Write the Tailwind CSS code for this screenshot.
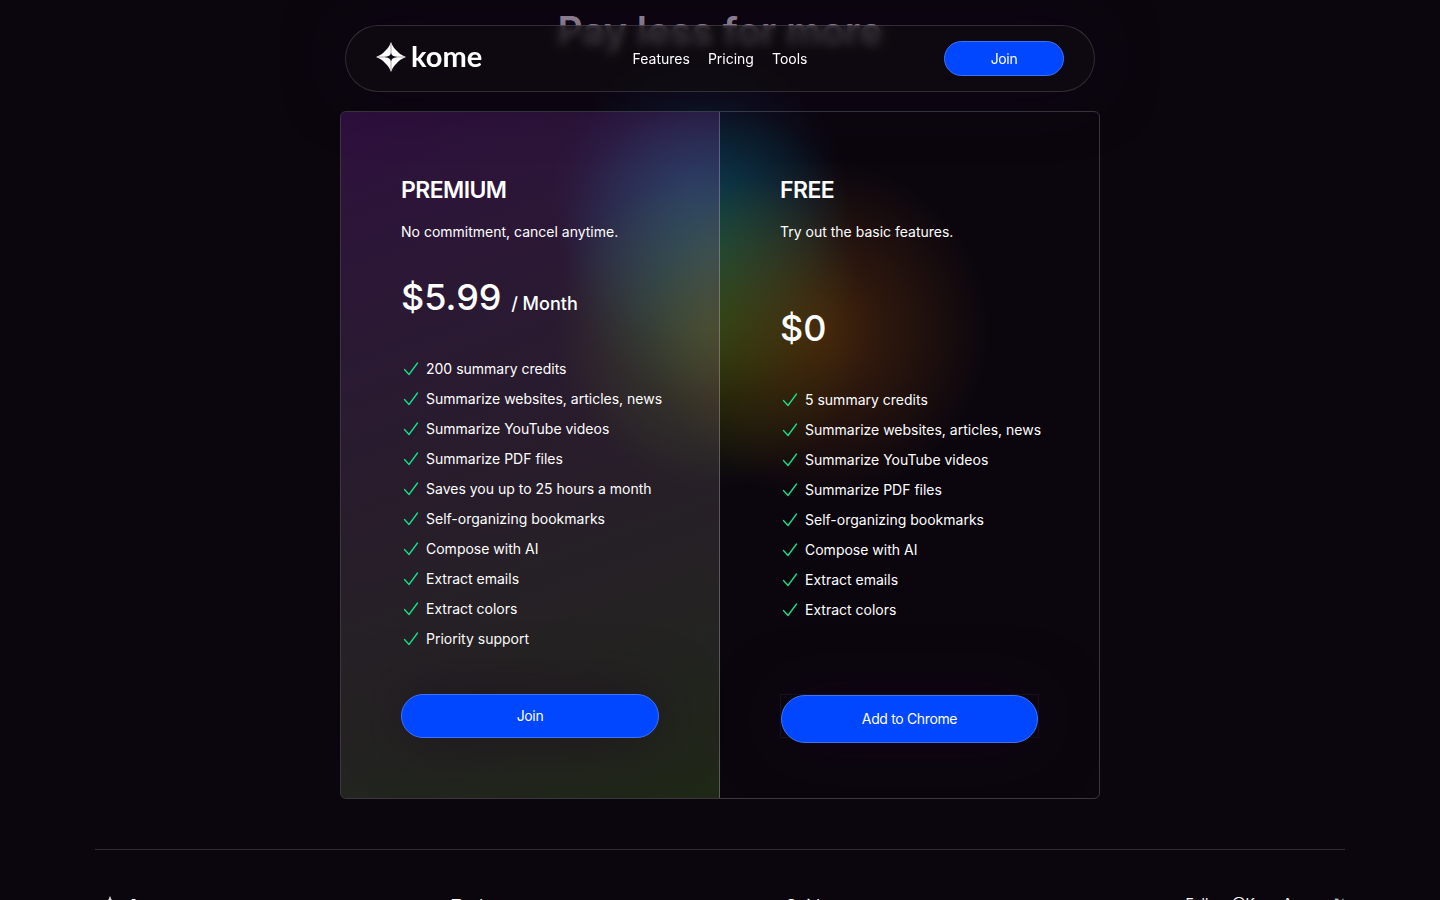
<!DOCTYPE html>
<html lang="en">
<head>
  <meta charset="UTF-8" />
  <meta name="viewport" content="width=device-width, initial-scale=1" />
  <title>Kome - Pricing</title>
  <script src="https://cdn.jsdelivr.net/npm/@tailwindcss/browser@4"></script>
</head>
<body class="h-screen overflow-hidden bg-[#0b060e] font-[Inter,sans-serif] text-sm text-white">

  <!-- icons used more than once -->
  <svg class="hidden">
    <symbol id="check" viewBox="0 0 20 20">
      <path d="M3.500 10.500 8 15.500 16.500 4" fill="none" stroke="#10e58a" stroke-width="1.3" stroke-linecap="round" stroke-linejoin="round" />
    </symbol>
    <symbol id="star" viewBox="0 0 30 30">
      <path d="M15 0C16.500 4 18 6.500 21 9 23.500 12 26 13.500 30 15 26 16.500 23.500 18 21 21 18 23.500 16.500 26 15 30 13.500 26 12 23.500 9 21 6.500 18 4 16.500 0 15 4 13.500 6.500 12 9 9 12 6.500 13.500 4 15 0Z" fill="#fff" />
      <path d="M15 2V28M2 15H28" stroke="#0f0a12" stroke-opacity="0.45" stroke-width="0.8" />
      <path d="M15 11Q15.500 14.300 21.500 15 15.500 15.700 15 19.500 14.500 15.700 8.500 15 14.500 14.300 15 11Z" fill="#0f0a12" />
    </symbol>
  </svg>

  <!-- NAVBAR -->
  <header class="fixed inset-x-0 top-[25px] z-20 mx-auto flex h-[67px] w-full max-w-[750px] items-center justify-between rounded-full border border-white/15 bg-[#0f0b11]/70 px-[30px] shadow-[0_0_60px_rgba(20,0,30,0.5)] backdrop-blur-[5px]">
    <a href="/" class="flex flex-1 items-center gap-[5px] pb-1">
      <svg class="size-[30px] shrink-0"><use href="#star" /></svg>
      <span class="pb-[2px] font-[Lato,sans-serif] text-[29px] leading-[30px] font-bold">kome</span>
    </a>
    <nav class="flex gap-[18px]">
      <a href="#features">Features</a>
      <a href="#pricing">Pricing</a>
      <a href="#tools">Tools</a>
    </nav>
    <div class="flex flex-1 justify-end">
      <button class="h-[35px] w-[120px] rounded-full border border-[#3f72fa] bg-[#0047ff] tracking-tight">Join</button>
    </div>
  </header>

  <main id="pricing" class="relative mx-auto w-full max-w-[760px]">
    <h2 class="h-[111px] pt-[6px] text-center text-[39px] leading-[50px] font-semibold text-[#a89bad]">Pay less for more</h2>

    <!-- colour glow behind the plans -->
    <div class="absolute top-[50px] left-[210px] -z-10 size-[300px] bg-radial from-[#0e4070]/50 from-5% to-transparent to-70%"></div>
    <div class="absolute top-[100px] left-[220px] -z-10 size-[300px] bg-radial from-[#0a5458]/60 from-5% to-transparent to-70%"></div>
    <div class="absolute top-[170px] left-[210px] -z-10 size-[320px] bg-radial from-[#3d6b00]/50 to-transparent to-70%"></div>
    <div class="absolute top-[160px] left-[310px] -z-10 size-[340px] bg-radial from-[#7a3d0a]/50 to-transparent to-70%"></div>

    <section class="grid min-h-[688px] grid-cols-2 overflow-hidden rounded-md border border-white/20">
      <div class="flex flex-col border-r border-white/25 bg-linear-160 from-[#b932ff]/20 via-[#9b74a0]/20 to-[#6eaf37]/20 px-[60px] pt-[62px] pb-[60px]">
        <h3 class="text-[23px] leading-8 font-semibold tracking-tight">PREMIUM</h3>
        <p class="mt-4 leading-5">No commitment, cancel anytime.</p>
        <p class="mt-[31px] text-4xl leading-[48px] font-medium">$5.99 <span class="text-lg">/ Month</span></p>
        <ul class="mt-[33px] leading-[30px] whitespace-nowrap">
          <li class="flex items-center gap-[5px]"><svg class="size-5 shrink-0"><use href="#check" /></svg>200 summary credits</li>
          <li class="flex items-center gap-[5px]"><svg class="size-5 shrink-0"><use href="#check" /></svg>Summarize websites, articles, news</li>
          <li class="flex items-center gap-[5px]"><svg class="size-5 shrink-0"><use href="#check" /></svg>Summarize YouTube videos</li>
          <li class="flex items-center gap-[5px]"><svg class="size-5 shrink-0"><use href="#check" /></svg>Summarize PDF files</li>
          <li class="flex items-center gap-[5px]"><svg class="size-5 shrink-0"><use href="#check" /></svg>Saves you up to 25 hours a month</li>
          <li class="flex items-center gap-[5px]"><svg class="size-5 shrink-0"><use href="#check" /></svg>Self-organizing bookmarks</li>
          <li class="flex items-center gap-[5px]"><svg class="size-5 shrink-0"><use href="#check" /></svg>Compose with AI</li>
          <li class="flex items-center gap-[5px]"><svg class="size-5 shrink-0"><use href="#check" /></svg>Extract emails</li>
          <li class="flex items-center gap-[5px]"><svg class="size-5 shrink-0"><use href="#check" /></svg>Extract colors</li>
          <li class="flex items-center gap-[5px]"><svg class="size-5 shrink-0"><use href="#check" /></svg>Priority support</li>
        </ul>
        <button class="mt-auto h-11 rounded-full border border-[#3f72fa] bg-[#0047ff] tracking-tight shadow-[0_0_60px_rgba(26,0,30,0.5)]">Join</button>
      </div>

      <div class="flex flex-col px-[60px] pt-[62px] pb-[60px]">
        <h3 class="text-[23px] leading-8 font-semibold tracking-tight">FREE</h3>
        <p class="mt-4 leading-5">Try out the basic features.</p>
        <p class="mt-[62px] text-4xl leading-[48px] font-medium">$0</p>
        <ul class="mt-[33px] leading-[30px] whitespace-nowrap">
          <li class="flex items-center gap-[5px]"><svg class="size-5 shrink-0"><use href="#check" /></svg>5 summary credits</li>
          <li class="flex items-center gap-[5px]"><svg class="size-5 shrink-0"><use href="#check" /></svg>Summarize websites, articles, news</li>
          <li class="flex items-center gap-[5px]"><svg class="size-5 shrink-0"><use href="#check" /></svg>Summarize YouTube videos</li>
          <li class="flex items-center gap-[5px]"><svg class="size-5 shrink-0"><use href="#check" /></svg>Summarize PDF files</li>
          <li class="flex items-center gap-[5px]"><svg class="size-5 shrink-0"><use href="#check" /></svg>Self-organizing bookmarks</li>
          <li class="flex items-center gap-[5px]"><svg class="size-5 shrink-0"><use href="#check" /></svg>Compose with AI</li>
          <li class="flex items-center gap-[5px]"><svg class="size-5 shrink-0"><use href="#check" /></svg>Extract emails</li>
          <li class="flex items-center gap-[5px]"><svg class="size-5 shrink-0"><use href="#check" /></svg>Extract colors</li>
        </ul>
        <div class="mt-auto h-11 border border-white/5">
          <button class="h-12 w-full rounded-full border border-[#3f72fa] bg-[#0047ff] tracking-tight shadow-[0_0_60px_rgba(26,0,30,0.5)]">Add to Chrome</button>
        </div>
      </div>
    </section>
  </main>

  <!-- FOOTER -->
  <footer class="mx-auto mt-[50px] grid w-full max-w-[1250px] grid-cols-[356px_334px_1fr_auto] items-start border-t border-white/15 pt-[44px]">
    <a href="/" class="flex items-center gap-[5px]">
      <svg class="size-[30px] shrink-0"><use href="#star" /></svg>
      <span class="pb-1 font-[Lato,sans-serif] text-[29px] leading-[30px] font-bold">kome</span>
    </a>
    <h4 class="text-base leading-[22px]">Tools</h4>
    <h4 class="text-base leading-[22px]">Guides</h4>
    <a href="#follow" class="leading-5">Follow @KomeApp on 𝕏</a>
  </footer>
</body>
</html>
